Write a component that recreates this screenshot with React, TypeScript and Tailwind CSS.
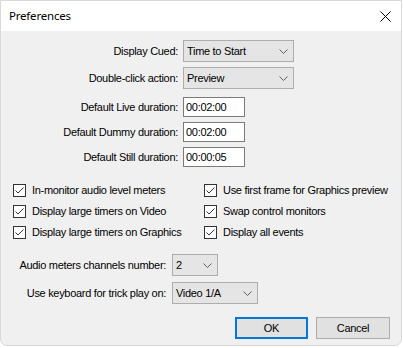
const FONT = { fontFamily: '"Liberation Sans", Arial, sans-serif' };

const Chevron = () => (
  <svg width="9" height="5" viewBox="0 0 9 5" className="shrink-0">
    <path d="M0.5 0.5 L4.5 4.5 L8.5 0.5" fill="none" stroke="#606060" strokeWidth="1" />
  </svg>
);

const Select = ({ value, w }: { value: string; w: string }) => (
  <div className={`${w} h-[22px] border border-[#adadad] bg-[#e5e5e5] flex items-center justify-between pl-[3px] pr-[5px]`}>
    <span>{value}</span>
    <Chevron />
  </div>
);

const TextBox = ({ value }: { value: string }) => (
  <div className="w-[62px] h-[20px] border border-[#7a7a7a] bg-white flex items-center pl-[2px]">
    {value}
  </div>
);

const Check = ({ label }: { label: string }) => (
  <div className="flex items-center h-[21px] gap-[6px]">
    <div className="w-[13px] h-[13px] border border-[#333333] bg-white flex items-center justify-center">
      <svg width="11" height="11" viewBox="0 0 11 11">
        <path d="M1.5 5.5 L4 8 L9.5 2.5" fill="none" stroke="#333333" strokeWidth="1" />
      </svg>
    </div>
    <span>{label}</span>
  </div>
);

export default function App() {
  return (
    <div className="w-[403px] h-[348px] bg-white text-[11px] tracking-[-0.3px] text-black" style={FONT}>
      <div className="w-[402px] h-[346px] border border-[#d9d9d9] rounded-b-[7px] overflow-hidden flex flex-col bg-[#f0f0f0]">
        {/* title bar */}
        <div className="h-[30px] bg-white flex items-center justify-between pl-[8px] pr-[10px]">
          <span className="text-[11.5px] tracking-[-0.2px]" style={{ fontFamily: '"Noto Sans", sans-serif' }}>Preferences</span>
          <svg width="11" height="11" viewBox="0 0 11 11">
            <path d="M0.5 0.5 L10.5 10.5 M10.5 0.5 L0.5 10.5" stroke="#000" strokeWidth="1" />
          </svg>
        </div>

        <div className="flex flex-col pt-[9px]">
          <div className="flex items-center gap-[5px]">
            <span className="w-[177px] text-right">Display Cued:</span>
            <Select value="Time to Start" w="w-[111px]" />
          </div>
          <div className="flex items-center gap-[5px] mt-[5px]">
            <span className="w-[177px] text-right">Double-click action:</span>
            <Select value="Preview" w="w-[111px]" />
          </div>
          <div className="flex items-center gap-[5px] mt-[8px]">
            <span className="w-[177px] text-right">Default Live duration:</span>
            <TextBox value="00:02:00" />
          </div>
          <div className="flex items-center gap-[5px] mt-[5px]">
            <span className="w-[177px] text-right">Default Dummy duration:</span>
            <TextBox value="00:02:00" />
          </div>
          <div className="flex items-center gap-[5px] mt-[5px]">
            <span className="w-[177px] text-right">Default Still duration:</span>
            <TextBox value="00:00:05" />
          </div>

          <div className="grid grid-cols-[191px_1fr] mt-[13px] pl-[12px]">
            <Check label="In-monitor audio level meters" />
            <Check label="Use first frame for Graphics preview" />
            <Check label="Display large timers on Video" />
            <Check label="Swap control monitors" />
            <Check label="Display large timers on Graphics" />
            <Check label="Display all events" />
          </div>

          <div className="flex items-center gap-[6px] mt-[11px]">
            <span className="w-[165px] text-right">Audio meters channels number:</span>
            <Select value="2" w="w-[46px]" />
          </div>
          <div className="flex items-center gap-[6px] mt-[6px]">
            <span className="w-[165px] text-right">Use keyboard for trick play on:</span>
            <Select value="Video 1/A" w="w-[86px]" />
          </div>

          <div className="flex justify-end gap-[8px] pr-[11px] mt-[13px]">
            <div className="w-[73px] h-[22px] border-2 border-[#0078d7] bg-[#e1e1e1] flex items-center justify-center">OK</div>
            <div className="w-[74px] h-[22px] border border-[#adadad] bg-[#e1e1e1] flex items-center justify-center">Cancel</div>
          </div>
        </div>
      </div>
    </div>
  );
}
